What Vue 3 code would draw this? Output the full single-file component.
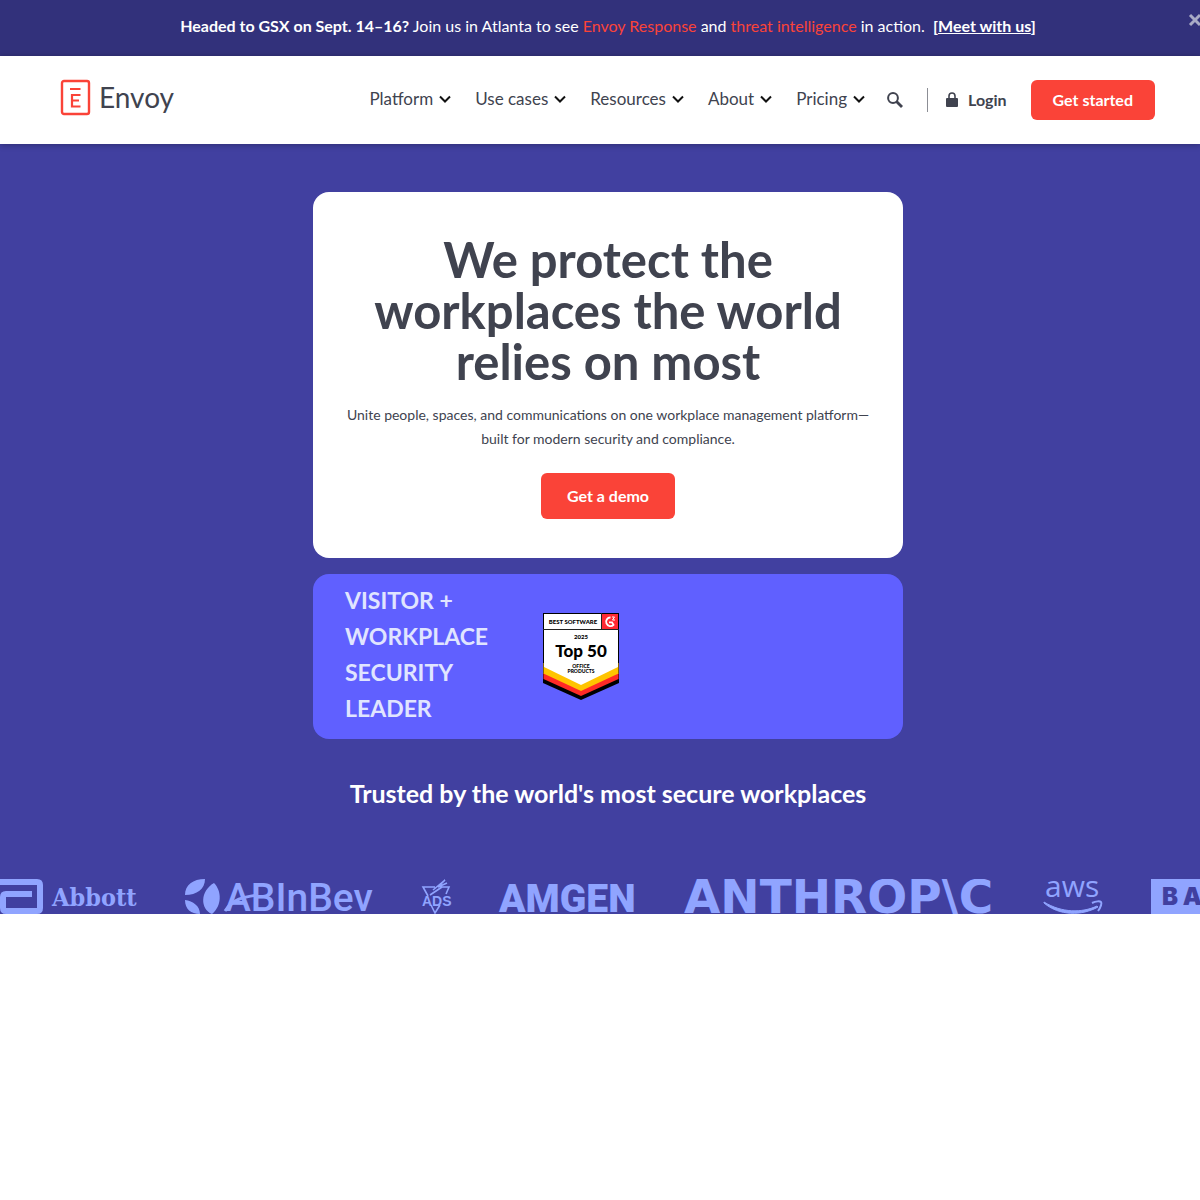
<script setup>
const navItems = ['Platform', 'Use cases', 'Resources', 'About', 'Pricing']
</script>

<template>
  <div class="page">
    <aside class="banner">
      <p>
        <strong>Headed to GSX on Sept. 14–16?</strong> Join us in Atlanta to see
        <a href="#response" class="accent">Envoy Response</a> and
        <a href="#threat" class="accent">threat intelligence</a> in action.&nbsp;
        <strong>[<a href="#meet" class="meet">Meet with us</a>]</strong>
      </p>
      <button type="button" class="close" aria-label="Close">
        <svg width="12" height="12" viewBox="0 0 12 12"><path d="M1 1 11 11M11 1 1 11" stroke="#a9abc6" stroke-width="3" /></svg>
      </button>
    </aside>

    <header class="header">
      <a href="#home" class="logo" aria-label="Envoy home">
        <svg width="114" height="36" viewBox="0 0 114 36">
          <rect x="2" y="1" width="27" height="33" rx="2" fill="none" stroke="#fa4338" stroke-width="2.400" />
          <path d="M10 9h10.500M20.500 15H12v11.500h8.500M12 20.500h7" fill="none" stroke="#fa4338" stroke-width="2.200" />
          <text x="39" y="28" class="logo-word">Envoy</text>
        </svg>
      </a>
      <nav class="nav">
        <a v-for="item in navItems" :key="item" href="#menu" class="nav-item">
          {{ item }}
          <svg width="12" height="8" viewBox="0 0 12 8"><path d="M1 1.500 6 6.500 11 1.500" fill="none" stroke="#111" stroke-width="2" /></svg>
        </a>
      </nav>
      <button type="button" class="search" aria-label="Search">
        <svg width="16" height="16" viewBox="0 0 16 16"><circle cx="6" cy="6" r="4.900" fill="none" stroke="#40434f" stroke-width="2" /><path d="m9.500 9.500 5.500 5.500" stroke="#40434f" stroke-width="2.800" /></svg>
      </button>
      <a href="#login" class="login">
        <svg width="12" height="16" viewBox="0 0 12 16"><path d="M3 7V4a3 3 0 0 1 6 0v3" fill="none" stroke="#40434f" stroke-width="1.600" /><rect y="6" width="12" height="9" rx="1" fill="#40434f" /></svg>
        Login
      </a>
      <button type="button" class="btn start">Get started</button>
    </header>

    <main class="hero">
      <section class="card">
        <h1>We protect the workplaces the world relies on most</h1>
        <p>Unite people, spaces, and communications on one workplace management platform—<br />built for modern security and compliance.</p>
        <button type="button" class="btn demo">Get a demo</button>
      </section>

      <section class="award">
        <h2>VISITOR + WORKPLACE SECURITY LEADER</h2>
        <svg class="badge" width="76" height="88" viewBox="0 0 76 88">
          <path d="M0 0h76v70L38 87 0 70z" fill="#000" />
          <path d="M0.500 60h75v6L38 83 0.500 66z" fill="#ff2a26" />
          <path d="M0.500 50h75v10.500L38 78 0.500 60.500z" fill="#ffc400" />
          <path d="M1 1h74v53L38 72 1 54z" fill="#fff" />
          <path d="M0 16.500h76" stroke="#222" />
          <rect x="59" y="1" width="16" height="15" fill="#ff2a33" />
          <path d="M58.500 0v16" stroke="#222" />
          <path d="M67.500 4.500a4.300 4.300 0 1 0 3 7.300l-1.500-2.500h-3" fill="none" stroke="#fff" stroke-width="1.800" />
          <path d="M69 4h2.500L69.500 7H72" fill="none" stroke="#fff" />
          <g class="badge-text">
            <text x="30" y="11" class="tiny">BEST SOFTWARE</text>
            <text x="38" y="26" class="tiny">2025</text>
            <text x="38" y="44" class="top">Top 50</text>
            <text x="38" y="55" class="micro">OFFICE</text>
            <text x="38" y="60" class="micro">PRODUCTS</text>
          </g>
        </svg>
      </section>

      <h3>Trusted by the world's most secure workplaces</h3>

      <div class="logos">
        <svg width="137" height="35" viewBox="0 0 137 35">
          <path d="M0 3h37q3 0 3 3v23q0 3-3 3H6q-3 0-3-3V18q0-3 3-3h26" fill="none" stroke="#90a4ff" stroke-width="6" />
          <text x="52" y="27" class="abbott">Abbott</text>
        </svg>
        <svg width="188" height="35" viewBox="0 0 188 35">
          <path d="M0 16C0 6 8 0 20 0 20 10 12 16 0 16zM29 4C37 12 37 27 27 35 15 30 15 12 29 4zM0 21C8 22 15 27 15 35 6 35 0 30 0 21z" fill="#90a4ff" />
          <text x="40" y="32" class="abinbev">ABInBev</text>
          <path d="M40 32C48 20 58 18 73 16" fill="none" stroke="#90a4ff" stroke-width="3" />
        </svg>
        <svg width="30" height="35" viewBox="0 0 30 35">
          <path d="M14 8H2l5 9M19 8h9l-3 7M10 26l4 8 5-8M12 11 24 1 17 8l9-4M9 16l12-8" fill="none" stroke="#90a4ff" stroke-width="1.600" />
          <text x="1" y="27" class="ads">ADS</text>
        </svg>
        <svg width="137" height="35" viewBox="0 0 137 35"><text x="0" y="33" class="amgen">AMGEN</text></svg>
        <svg width="312" height="35" viewBox="0 0 312 35" class="clipped"><text x="0" y="34" class="anthropic">ANTHROP\C</text></svg>
        <svg width="59" height="35" viewBox="0 0 59 35">
          <text x="1" y="18" class="aws">aws</text>
          <path d="M0 23C18 34 38 34 53 27L54 28C38 37 15 37 0 24z" fill="#90a4ff" stroke="#90a4ff" />
          <path d="M48 24c4-2 8-2 9-1s0 5-3 9" fill="none" stroke="#90a4ff" stroke-width="2" />
        </svg>
        <svg width="150" height="35" viewBox="0 0 150 35">
          <rect width="150" height="35" fill="#90a4ff" />
          <text x="11" y="26" class="bank">B A</text>
        </svg>
      </div>
    </main>
  </div>
</template>

<style>
body {
  margin: 0;
  background: #fff;
}
</style>

<style scoped>
.page {
  overflow-x: clip;
  font-family: Lato, sans-serif;
  font-size: 16px;
  color: #40434f;
}
a {
  color: inherit;
  text-decoration: none;
}
h1, h2, h3, p {
  margin: 0;
}
button {
  font: inherit;
  border: 0;
  padding: 0;
  background: none;
  cursor: pointer;
}
svg {
  display: block;
  flex: none;
  overflow: visible;
}
.clipped {
  overflow: hidden;
}
.banner {
  position: relative;
  padding: 14px 0 18px 16px;
  background: #32317b;
  color: #fff;
  text-align: center;
  line-height: 24px;
}
.accent {
  color: #fa4338;
}
.meet {
  text-decoration: underline;
}
.close {
  position: absolute;
  top: 14px;
  right: -1px;
}
.header {
  position: relative;
  display: flex;
  align-items: center;
  padding: 24px 45px 24px 60px;
  background: #fff;
  box-shadow: 0 1px 6px rgba(0, 0, 0, 0.3);
}
.logo {
  margin-right: auto;
  padding-bottom: 4px;
}
.logo-word {
  font-size: 28px;
  fill: #40434f;
}
.nav {
  display: flex;
  gap: 24px;
  padding-bottom: 2px;
}
.nav-item {
  display: flex;
  align-items: center;
  gap: 6px;
  font-size: 17px;
  line-height: 24px;
}
.search {
  margin: 0 24px 0 22px;
}
.login {
  display: flex;
  align-items: center;
  gap: 10px;
  padding-left: 18px;
  margin-right: 24px;
  border-left: 1px solid #8c8e95;
  font-weight: 700;
  line-height: 24px;
}
.btn {
  border-radius: 6px;
  background: #fa4338;
  color: #fff;
  font-weight: 700;
}
.start {
  padding: 0 22px;
  line-height: 40px;
}
.hero {
  padding-top: 48px;
  background: #4140a0;
}
.card, .award {
  box-sizing: border-box;
  width: calc(100% - 32px);
  max-width: 590px;
  border-radius: 16px;
  position: relative;
  left: 8px;
  margin: 0 auto;
}
.card {
  padding: 42px 24px 39px;
  background: #fff;
  text-align: center;
}
h1 {
  max-width: 500px;
  margin: 0 auto;
  font-size: 49px;
  line-height: 51px;
}
.card p {
  margin: 16px 0 22px;
  font-size: 14px;
  line-height: 24px;
}
.demo {
  padding: 0 26px;
  line-height: 46px;
}
.award {
  display: flex;
  align-items: center;
  gap: 56px;
  margin-top: 16px;
  padding: 8px 32px 13px;
  background: #6060ff;
}
.badge {
  margin-top: 6px;
}
h2 {
  width: 142px;
  font-size: 23px;
  line-height: 36px;
  color: #e0e5ff;
}
h3 {
  padding: 36px 0 68px 16px;
  text-align: center;
  font-size: 25px;
  line-height: 36px;
  color: #fff;
}
.logos {
  display: flex;
  gap: 48px;
  overflow-x: clip;
}
.logos text {
  fill: #90a4ff;
}
.badge-text {
  text-anchor: middle;
  font-weight: 900;
}
.tiny {
  font-size: 6px;
}
.micro {
  font-size: 5px;
}
.top {
  font-size: 17px;
}
.abbott {
  font: 700 25px "DejaVu Serif Condensed", "Liberation Serif", serif;
}
.abinbev {
  font: 500 39px Roboto, sans-serif;
}
.ads {
  font: 700 14px "Liberation Sans", sans-serif;
}
.amgen {
  font: 900 39px Roboto, sans-serif;
}
.anthropic {
  font: 700 47px "DejaVu Sans", sans-serif;
}
.aws {
  font: 500 30px "Open Sans", sans-serif;
}
.logos .bank {
  font: 900 24px Inter, sans-serif;
  fill: #4140a0;
}
</style>
